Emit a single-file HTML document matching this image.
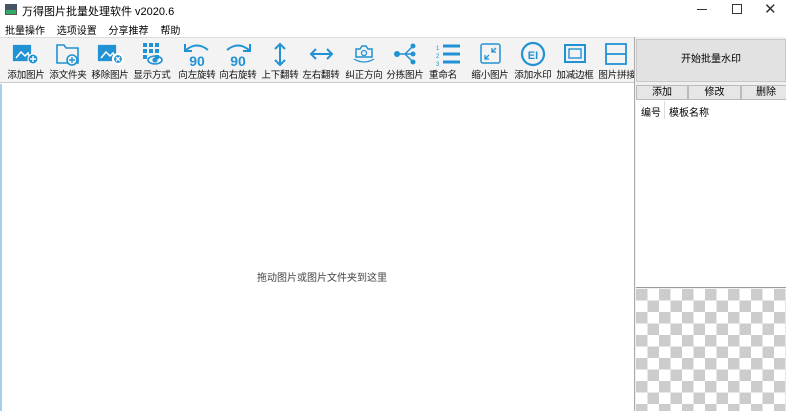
<!DOCTYPE html>
<html><head><meta charset="utf-8"><style>
*{margin:0;padding:0;box-sizing:border-box}
body{width:786px;height:411px;overflow:hidden;background:#fff;font-family:"Liberation Sans","Noto Sans CJK SC",sans-serif;font-size:12px;color:#000;position:relative}
.a{position:absolute}
.lbl{position:absolute;top:67px;font-size:9.5px;letter-spacing:-0.2px;white-space:nowrap;transform:translateX(-50%);color:#111}
.btn{position:absolute;top:85px;height:15px;background:#e6e6e6;border:1px solid #bbb;text-align:center;font-size:10px;line-height:13px}
</style></head><body>
<div class="a" style="left:5px;top:4px;width:12px;height:11px;background:#3a6;border:1px solid #555"></div>
<div class="a" style="left:5px;top:4px;width:12px;height:6px;background:#456"></div>
<div class="a" style="left:22px;top:3px;font-size:11px">万得图片批量处理软件 v2020.6</div>
<div class="a" style="left:697px;top:9px;width:10px;height:1px;background:#333"></div>
<div class="a" style="left:732px;top:4px;width:10px;height:10px;border:1px solid #333"></div>
<div class="a" style="left:764px;top:0px;font-size:15px;color:#333">✕</div>
<div class="a" style="left:5px;top:22px;font-size:10px;word-spacing:9px">批量操作 选项设置 分享推荐 帮助</div>
<div class="a" style="left:0;top:37px;width:634px;height:46px;background:#f3f3f3;border-top:1px solid #ddd;border-bottom:1px solid #ccc"></div>
<svg class="a" style="left:0;top:0" width="634" height="83" fill="none" stroke="#2192d4" stroke-width="2.2">
<path d="M14 46h16v14H14z" fill="#2192d4"/><path d="M16 58l5-6 4 4 3-3 2 5" stroke="#fff" stroke-width="1.5"/><circle cx="33" cy="59" r="5" fill="#2192d4" stroke="#fff" stroke-width="1"/><path d="M30 59h6M33 56v6" stroke="#fff" stroke-width="1.4"/>
<path d="M57 45h7l2 3h12v15H57z" stroke-width="1.6"/><circle cx="72" cy="60" r="5" fill="#f3f3f3" stroke-width="1.6"/><path d="M69 60h6M72 57v6" stroke-width="1.4"/>
<path d="M99 46h16v14H99z" fill="#2192d4"/><path d="M101 58l5-6 4 4 3-3 2 5" stroke="#fff" stroke-width="1.5"/><circle cx="118" cy="59" r="5" fill="#2192d4" stroke="#fff"/><path d="M116 57l4 4M120 57l-4 4" stroke="#fff" stroke-width="1.4"/>
<g fill="#2192d4" stroke="none"><rect x="143" y="43" width="4" height="4"/><rect x="149" y="43" width="4" height="4"/><rect x="155" y="43" width="4" height="4"/><rect x="143" y="49" width="4" height="4"/><rect x="149" y="49" width="4" height="4"/><rect x="155" y="49" width="4" height="4"/><rect x="143" y="55" width="4" height="4"/><rect x="155" y="55" width="4" height="4"/></g>
<ellipse cx="155" cy="60" rx="7" ry="4" stroke-width="1.6"/><circle cx="155" cy="60" r="1.5" fill="#2192d4"/>
<path d="M186 50q11-9 22 0" stroke-width="2"/><path d="M185 44v7h7" stroke-width="2"/>
<text x="197" y="66" font-size="14" font-weight="bold" fill="#2192d4" stroke="none" text-anchor="middle" font-family="Liberation Sans">90</text>
<path d="M227 50q11-9 22 0" stroke-width="2"/><path d="M250 44v7h-7" stroke-width="2"/>
<text x="238" y="66" font-size="14" font-weight="bold" fill="#2192d4" stroke="none" text-anchor="middle" font-family="Liberation Sans">90</text>
<path d="M280 44v21M275 49l5-5 5 5M275 60l5 5 5-5" stroke-width="2"/>
<path d="M311 54h21M316 49l-5 5 5 5M327 49l5 5-5 5" stroke-width="2"/>
<path d="M356 49h4l2-3h4l2 3h4v8h-16z" stroke-width="1.5"/><circle cx="364" cy="53" r="2.5" stroke-width="1.3"/><path d="M354 59q10 6 20 0" stroke-width="1.3"/>
<path d="M397 54h8M405 54l8-8M405 54h8M405 54l8 8" stroke-width="1.5"/><g fill="#2192d4" stroke="none"><circle cx="397" cy="54" r="3"/><circle cx="413" cy="46" r="2.5"/><circle cx="413" cy="54" r="2.5"/><circle cx="413" cy="62" r="2.5"/></g>
<path d="M443 46h17M443 54h17M443 62h17" stroke-width="3"/><text x="436" y="50" font-size="6" fill="#2192d4" stroke="none">1</text><text x="436" y="58" font-size="6" fill="#2192d4" stroke="none">2</text><text x="436" y="66" font-size="6" fill="#2192d4" stroke="none">3</text>
<rect x="481" y="44" width="19" height="19" rx="2" stroke-width="1.5"/><path d="M485 59l4-4M485 55v4h4M496 48l-4 4M492 48v4h4" stroke-width="1.3"/>
<circle cx="533" cy="54" r="11" stroke-width="2.2"/><text x="533" y="59" font-size="11" font-weight="bold" fill="#2192d4" stroke="none" text-anchor="middle" font-family="Liberation Sans">EI</text>
<rect x="565" y="45" width="20" height="17" stroke-width="2"/><rect x="569" y="49" width="12" height="9" stroke-width="1.4"/>
<rect x="606" y="44" width="20" height="20" stroke-width="1.8"/><path d="M606 54h20" stroke-width="1.8"/>
</svg>
<div class="lbl" style="left:26px">添加图片</div>
<div class="lbl" style="left:68px">添文件夹</div>
<div class="lbl" style="left:110px">移除图片</div>
<div class="lbl" style="left:152px">显示方式</div>
<div class="lbl" style="left:197px">向左旋转</div>
<div class="lbl" style="left:238px">向右旋转</div>
<div class="lbl" style="left:280px">上下翻转</div>
<div class="lbl" style="left:321px">左右翻转</div>
<div class="lbl" style="left:364px">纠正方向</div>
<div class="lbl" style="left:405px">分拣图片</div>
<div class="lbl" style="left:443px">重命名</div>
<div class="lbl" style="left:490px">缩小图片</div>
<div class="lbl" style="left:533px">添加水印</div>
<div class="lbl" style="left:575px">加减边框</div>
<div class="lbl" style="left:617px">图片拼接</div>
<div class="a" style="left:0;top:84px;width:2px;height:327px;background:#a8d0e8"></div>
<div class="a" style="left:257px;top:269px;font-size:10px;color:#444">拖动图片或图片文件夹到这里</div>
<div class="a" style="left:634px;top:37px;width:152px;height:374px;background:#f0f0f0;border-left:1px solid #aaa"></div>
<div class="a" style="left:636px;top:39px;width:150px;height:43px;background:#e2e2e2;border:1px solid #c8c8c8;text-align:center;line-height:40px;font-size:10px">开始批量水印</div>
<div class="btn" style="left:636px;width:52px">添加</div>
<div class="btn" style="left:688px;width:53px">修改</div>
<div class="btn" style="left:741px;width:50px">删除</div>
<div class="a" style="left:636px;top:100px;width:150px;height:188px;background:#fff;border-bottom:1px solid #999"></div>
<div class="a" style="left:641px;top:104px;font-size:10px">编号</div>
<div class="a" style="left:664px;top:101px;width:1px;height:18px;background:#ddd"></div>
<div class="a" style="left:669px;top:104px;font-size:10px">模板名称</div>
<div class="a" style="left:636px;top:289px;width:150px;height:122px;background-color:#fff;background-image:linear-gradient(45deg,#ccc 25%,transparent 25%,transparent 75%,#ccc 75%),linear-gradient(45deg,#ccc 25%,transparent 25%,transparent 75%,#ccc 75%);background-size:23px 23px;background-position:11.5px 0,0 11.5px"></div>
</body></html>
